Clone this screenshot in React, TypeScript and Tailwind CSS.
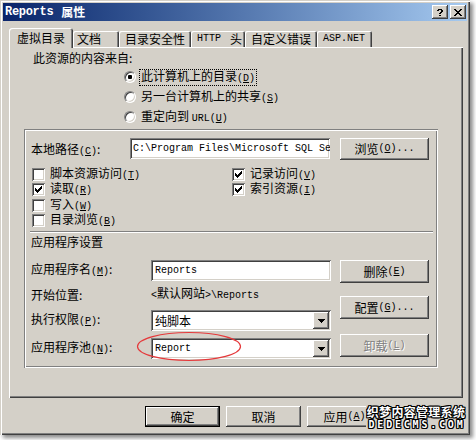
import React from "react";

const MONO = "font-['Liberation_Mono',monospace] text-[10px]";
const RAISED =
  "shadow-[inset_-1px_-1px_0_#404040,inset_1px_1px_0_#ffffff,inset_-2px_-2px_0_#808080]";
const SUNKEN =
  "shadow-[inset_1px_1px_0_#808080,inset_-1px_-1px_0_#ffffff,inset_2px_2px_0_#404040,inset_-2px_-2px_0_#d4d0c8]";
const OUTLINE =
  "[text-shadow:1px_0_0_#000,-1px_0_0_#000,0_1px_0_#000,0_-1px_0_#000,1px_1px_0_#000,-1px_-1px_0_#000,1px_-1px_0_#000,-1px_1px_0_#000]";

function M({ children }: { children: React.ReactNode }) {
  return <span className={MONO}>{children}</span>;
}
function Acc({ k }: { k: string }) {
  return (
    <span className={MONO}>
      (<span className="underline underline-offset-[1px]">{k}</span>)
    </span>
  );
}

function Pixels({ rows, fill = "#000" }: { rows: string[]; fill?: string }) {
  const w = rows[0].length;
  const h = rows.length;
  return (
    <svg width={w} height={h} viewBox={`0 0 ${w} ${h}`} shapeRendering="crispEdges">
      {rows.flatMap((r, y) =>
        r.split("").map((c, x) =>
          c === "#" ? <rect key={`${x}-${y}`} x={x} y={y} width={1} height={1} fill={fill} /> : null
        )
      )}
    </svg>
  );
}

const CHECK = ["......#", ".....##", "#...###", "##.###.", "#####..", ".###...", "..#...."];
const ARROW = ["#######", ".#####.", "..###..", "...#..."];
const CLOSE = ["##....##", ".##..##.", "..####..", "...##...", "..####..", ".##..##.", "##....##"];
const HELP = ["..####..", ".##..##.", ".....##.", "....##..", "...##...", "........", "...##..."];

function Button({
  className = "",
  children,
  disabled,
}: {
  className?: string;
  children?: React.ReactNode;
  disabled?: boolean;
}) {
  return (
    <div
      className={`flex items-center justify-center bg-[#d4d0c8] whitespace-nowrap ${RAISED} ${
        disabled ? "text-[#808080] [text-shadow:1px_1px_0_#ffffff]" : ""
      } ${className}`}
    >
      {children}
    </div>
  );
}

function Check({ checked }: { checked?: boolean }) {
  return (
    <div className={`w-[13px] h-[13px] shrink-0 bg-white ${SUNKEN} flex items-center justify-center`}>
      {checked && <Pixels rows={CHECK} />}
    </div>
  );
}

function Radio({ on }: { on?: boolean }) {
  return (
    <div className="w-[12px] h-[12px] shrink-0 rounded-full bg-white border border-t-[#808080] border-l-[#808080] border-r-white border-b-white shadow-[inset_1px_1px_0_#404040,inset_-1px_-1px_0_#d4d0c8] flex items-center justify-center">
      {on && <div className="w-[4px] h-[4px] rounded-[1px] bg-black" />}
    </div>
  );
}

function Select({ children }: { children: React.ReactNode }) {
  return (
    <div className={`w-[180px] h-[21px] bg-white ${SUNKEN} p-[2px] flex`}>
      <div className="flex-1 flex items-center pl-[2px] whitespace-nowrap">{children}</div>
      <div className={`w-[16px] h-[17px] bg-[#d4d0c8] ${RAISED} flex items-center justify-center`}>
        <Pixels rows={ARROW} />
      </div>
    </div>
  );
}

function Tab({ className, children }: { className: string; children: React.ReactNode }) {
  return (
    <div
      className={`h-[16px] flex items-center bg-[#d4d0c8] rounded-t-[2px] whitespace-nowrap shadow-[inset_1px_1px_0_#ffffff,inset_-1px_0_0_#404040,inset_-2px_0_0_#808080] ${className}`}
    >
      {children}
    </div>
  );
}

function CbRow({ className, checked, children }: { className: string; checked?: boolean; children: React.ReactNode }) {
  return (
    <div className={`flex items-center gap-[5px] ${className}`}>
      <Check checked={checked} />
      <span className="whitespace-nowrap">{children}</span>
    </div>
  );
}

export default function App() {
  return (
    <div className="relative w-[476px] h-[440px] bg-white overflow-hidden font-['Noto_Sans_CJK_SC',sans-serif] text-[12px] leading-[14px] text-black">
      <div className="w-[470px] h-[435px] bg-[#d4d0c8] p-[3px] flex flex-col shadow-[inset_1px_1px_0_#d4d0c8,inset_2px_2px_0_#ffffff,inset_-1px_-1px_0_#404040,inset_-2px_-2px_0_#808080,3px_3px_4px_rgba(0,0,0,0.45)]">
        {/* Title bar */}
        <div className="h-[18px] shrink-0 flex items-center bg-linear-to-r from-[#0a246a] to-[#a6caf0] pl-[2px] pr-[1px]">
          <div className="flex-1 flex items-center text-white font-bold">
            <span className="font-['Liberation_Mono',monospace] text-[12px] tracking-[-0.3px]">Reports</span>
            <span className="ml-[8px]">属性</span>
          </div>
          <div className={`w-[16px] h-[14px] bg-[#d4d0c8] ${RAISED} flex items-center justify-center`}>
            <Pixels rows={HELP} />
          </div>
          <div className={`ml-[2px] w-[16px] h-[14px] bg-[#d4d0c8] ${RAISED} flex items-center justify-center`}>
            <Pixels rows={CLOSE} />
          </div>
        </div>

        {/* Tabs */}
        <div className="mt-[7px] ml-[6px] h-[19px] shrink-0 flex items-end relative z-10">
          <div className="h-[20px] -mb-[1px] w-[64px] pl-[8px] flex items-center bg-[#d4d0c8] rounded-t-[3px] shadow-[inset_1px_1px_0_#ffffff,inset_-1px_0_0_#404040,inset_-2px_0_0_#808080]">
            虚拟目录
          </div>
          <Tab className="w-[46px] pl-[4px]">文档</Tab>
          <Tab className="w-[72px] pl-[6px]">目录安全性</Tab>
          <Tab className="w-[54px] pl-[6px]">
            <M>HTTP</M>
            <span className="ml-[9px]">头</span>
          </Tab>
          <Tab className="w-[72px] pl-[6px]">自定义错误</Tab>
          <Tab className="w-[55px] pl-[6px]">
            <M>ASP.NET</M>
          </Tab>
        </div>

        {/* Panel */}
        <div className="ml-[6px] w-[454px] h-[351px] shrink-0 flex flex-col shadow-[inset_1px_1px_0_#ffffff,inset_-1px_-1px_0_#404040,inset_-2px_-2px_0_#808080]">
          <div className="pl-[24px] pt-[4px]">此资源的内容来自:</div>

          <div className="mt-[2px] ml-[115px] flex flex-col">
            <div className="h-[20px] flex items-center">
              <Radio on />
              <span className="ml-[3px] border border-dotted border-black px-[1px] leading-[12px]">
                此计算机上的目录<Acc k="D" />
              </span>
            </div>
            <div className="h-[20px] flex items-center">
              <Radio />
              <span className="ml-[5px]">
                另一台计算机上的共享<Acc k="S" />
              </span>
            </div>
            <div className="h-[20px] flex items-center">
              <Radio />
              <span className="ml-[5px]">
                重定向到 <M>URL</M>
                <Acc k="U" />
              </span>
            </div>
          </div>

          {/* Group */}
          <div className="mt-[2px] ml-[15px] w-[414px] h-[239px] flex flex-col pl-[7px] pt-[9px] shadow-[inset_1px_1px_0_#808080,inset_2px_2px_0_#ffffff,inset_-1px_-1px_0_#ffffff,inset_-2px_-2px_0_#808080]">
            <div className="flex items-start">
              <div className="w-[99px] leading-[21px] whitespace-nowrap">
                本地路径<Acc k="C" />:
              </div>
              <div className={`w-[200px] h-[21px] bg-white ${SUNKEN} overflow-hidden whitespace-nowrap pl-[3px] pr-[2px] flex items-center`}>
                <M>{"C:\\Program Files\\Microsoft SQL Se"}</M>
              </div>
              <Button className="ml-[10px] w-[89px] h-[22px]">
                浏览<Acc k="O" />
                <M>...</M>
              </Button>
            </div>

            <div className="mt-[4px] ml-[1px] grid grid-cols-[200px_1fr]">
              <div className="flex flex-col">
                <CbRow className="h-[16px]">
                  脚本资源访问<Acc k="T" />
                </CbRow>
                <CbRow className="h-[15px]" checked>
                  读取<Acc k="R" />
                </CbRow>
                <CbRow className="h-[16px]">
                  写入<Acc k="W" />
                </CbRow>
                <CbRow className="h-[15px]">
                  目录浏览<Acc k="B" />
                </CbRow>
              </div>
              <div className="flex flex-col">
                <CbRow className="h-[16px]" checked>
                  记录访问<Acc k="V" />
                </CbRow>
                <CbRow className="h-[15px]" checked>
                  索引资源<Acc k="I" />
                </CbRow>
              </div>
            </div>

            <div className="mt-[3px] -ml-[1px] w-[403px] h-[2px] border-t border-t-[#808080] border-b border-b-white" />

            <div className="mt-[2px]">应用程序设置</div>

            <div className="mt-[11px] flex">
              <div className="w-[300px] flex flex-col">
                <div className="h-[21px] flex items-center">
                  <div className="w-[120px] whitespace-nowrap">
                    应用程序名<Acc k="M" />:
                  </div>
                  <div className={`w-[180px] h-[21px] bg-white ${SUNKEN} pl-[4px] flex items-center`}>
                    <M>Reports</M>
                  </div>
                </div>
                <div className="mt-[3px] h-[21px] flex items-center">
                  <div className="w-[120px]">开始位置:</div>
                  <div className="whitespace-nowrap">
                    <M>&lt;</M>默认网站<M>&gt;\Reports</M>
                  </div>
                </div>
                <div className="mt-[5px] h-[21px] flex items-center">
                  <div className="w-[120px] whitespace-nowrap">
                    执行权限<Acc k="P" />:
                  </div>
                  <Select>纯脚本</Select>
                </div>
                <div className="mt-[7px] h-[21px] flex items-center">
                  <div className="w-[120px] whitespace-nowrap">
                    应用程序池<Acc k="N" />:
                  </div>
                  <Select>
                    <M>Report</M>
                  </Select>
                </div>
              </div>
              <div className="ml-[9px] w-[89px] flex flex-col">
                <Button className="h-[23px]">
                  删除<Acc k="E" />
                </Button>
                <Button className="mt-[13px] h-[23px]">
                  配置<Acc k="G" />
                  <M>...</M>
                </Button>
                <Button className="mt-[15px] h-[23px]" disabled>
                  卸载<Acc k="L" />
                </Button>
              </div>
            </div>
          </div>
        </div>

        {/* Bottom buttons */}
        <div className="mt-[8px] ml-[142px] flex gap-[6px]">
          <div className="w-[75px] h-[21px] border border-black flex">
            <Button className="flex-1">确定</Button>
          </div>
          <Button className="w-[75px] h-[21px]">取消</Button>
          <Button className="w-[75px] h-[21px]">
            应用<Acc k="A" />
          </Button>
        </div>
      </div>

      {/* Red annotation ellipse */}
      <svg className="absolute left-[136px] top-[331px]" width="106" height="31" viewBox="0 0 106 31">
        <ellipse cx="53" cy="15.5" rx="51.5" ry="14" fill="none" stroke="#e5393b" strokeWidth="1.2" />
      </svg>

      {/* Watermark */}
      <div className="absolute left-[366px] top-[405px] w-[100px] h-[27px] bg-[#d4d0c8] flex flex-col items-center text-white font-bold">
        <div className={`text-[12px] leading-[13px] tracking-[0.3px] ${OUTLINE}`}>织梦内容管理系统</div>
        <div className={`mt-[1px] font-['DejaVu_Sans_Mono',monospace] text-[10px] leading-[11px] tracking-[2.8px] pl-[2px] ${OUTLINE}`}>
          DEDECMS.COM
        </div>
      </div>
    </div>
  );
}
